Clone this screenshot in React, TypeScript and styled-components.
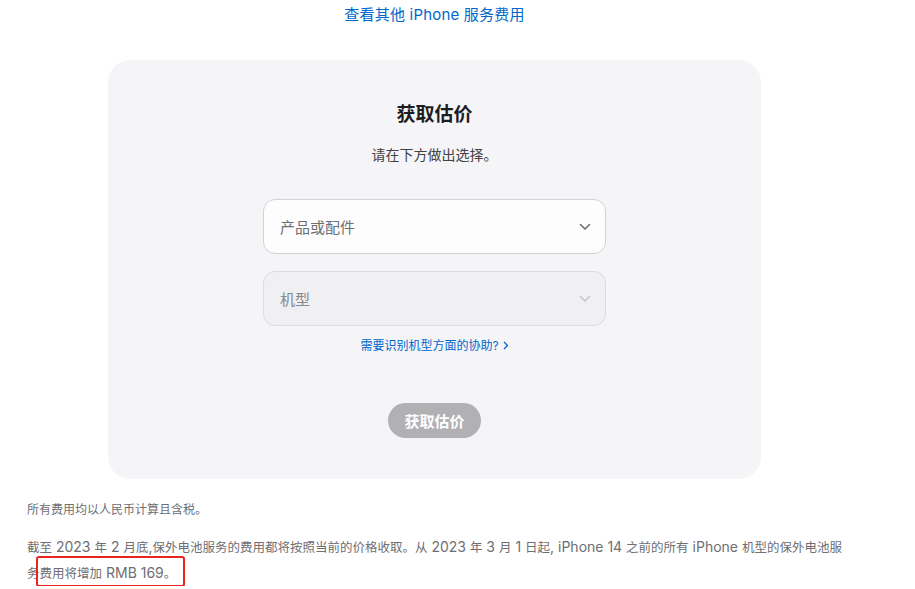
import React from "react";
import styled, { createGlobalStyle } from "styled-components";

const GlobalStyle = createGlobalStyle`
  body {
    margin: 0;
    background: #fff;
    font-family: Inter, "Noto Sans CJK SC", sans-serif;
    color: #1d1d1f;
  }
`;

const Page = styled.div`
  width: 869px;
`;

const TopLink = styled.a`
  display: block;
  text-align: center;
  font-size: 15px;
  line-height: 20px;
  padding-top: 5px;
  color: #0066cc;
  text-decoration: none;
  letter-spacing: 0.2px;
`;

const Card = styled.section`
  width: 653px;
  margin: 35px auto 0;
  box-sizing: border-box;
  padding: 42px 0 41px;
  background: #f5f5f7;
  border-radius: 22px;
  display: flex;
  flex-direction: column;
  align-items: center;
`;

const Title = styled.h2`
  margin: 0;
  font-size: 19px;
  line-height: 26px;
  font-weight: 700;
  color: #1d1d1f;
`;

const Subtitle = styled.p`
  margin: 17px 0 0;
  font-size: 14px;
  line-height: 20px;
  color: #424245;
`;

const Field = styled.div<{ $disabled?: boolean }>`
  width: 343px;
  height: 55px;
  box-sizing: border-box;
  margin-top: ${(p) => (p.$disabled ? "17px" : "34px")};
  padding: 0 14px 0 16px;
  display: flex;
  align-items: center;
  justify-content: space-between;
  border-radius: 12px;
  border: 1px solid ${(p) => (p.$disabled ? "#dcdce0" : "#d2d2d7")};
  background: ${(p) => (p.$disabled ? "#f0f0f2" : "#fdfdfd")};
  font-size: 15px;
  color: ${(p) => (p.$disabled ? "#86868b" : "#6e6e73")};
`;

const Chevron = ({ color }: { color: string }) => (
  <svg width="12" height="8" viewBox="0 0 12 8">
    <path d="M1.5 1.5 L6 6 L10.5 1.5" fill="none" stroke={color} strokeWidth="1.6" strokeLinecap="round" strokeLinejoin="round" />
  </svg>
);

const HelpLink = styled.a`
  margin-top: 11px;
  font-size: 12px;
  line-height: 17px;
  color: #0066cc;
  text-decoration: none;
  display: flex;
  align-items: center;
  gap: 4px;
`;

const Button = styled.button`
  margin-top: 49px;
  width: 93px;
  height: 35px;
  border: none;
  border-radius: 18px;
  background: #b1b1b4;
  color: #fff;
  font-family: inherit;
  font-size: 15px;
  font-weight: 700;
`;

const Footer = styled.footer`
  padding: 22px 0 0 27px;
  width: 818px;
  color: #6e6e73;
`;

const Note = styled.p`
  margin: 0;
  font-size: 12px;
  line-height: 17px;
`;

const Para = styled.p`
  margin: 16px 0 0;
  font-size: 12.5px;
  line-height: 25px;
`;

/* latin runs are set larger than the CJK runs, as in the source */
const Latin = styled.span`
  font-size: 14px;
`;

const Marked = styled.span`
  position: relative;
  display: inline-block;
  &::after {
    content: "";
    position: absolute;
    left: -4px;
    right: -9px;
    top: -4px;
    bottom: -1px;
    border: 2px solid #e8251f;
    border-radius: 3px;
  }
`;

export default function App() {
  return (
    <Page>
      <GlobalStyle />
      <TopLink href="#">查看其他 iPhone 服务费用</TopLink>
      <Card>
        <Title>获取估价</Title>
        <Subtitle>请在下方做出选择。</Subtitle>
        <Field>
          <span>产品或配件</span>
          <Chevron color="#6e6e73" />
        </Field>
        <Field $disabled>
          <span>机型</span>
          <Chevron color="#c7c7cc" />
        </Field>
        <HelpLink href="#">
          需要识别机型方面的协助?
          <svg width="6" height="9" viewBox="0 0 6 9">
            <path d="M1 1 L4.5 4.5 L1 8" fill="none" stroke="#0066cc" strokeWidth="1.3" />
          </svg>
        </HelpLink>
        <Button>获取估价</Button>
      </Card>
      <Footer>
        <Note>所有费用均以人民币计算且含税。</Note>
        <Para>
          截至<Latin> 2023 </Latin>年<Latin> 2 </Latin>月底<Latin>,</Latin>保外电池服务的费用都将按照当前的价格收取。从
          <Latin> 2023 </Latin>年<Latin> 3 </Latin>月<Latin> 1 </Latin>日起<Latin>, iPhone 14 </Latin>之前的所有
          <Latin> iPhone </Latin>机型的保外电池服务
          <Marked>
            费用将增加<Latin> RMB 169</Latin>。
          </Marked>
        </Para>
      </Footer>
    </Page>
  );
}
